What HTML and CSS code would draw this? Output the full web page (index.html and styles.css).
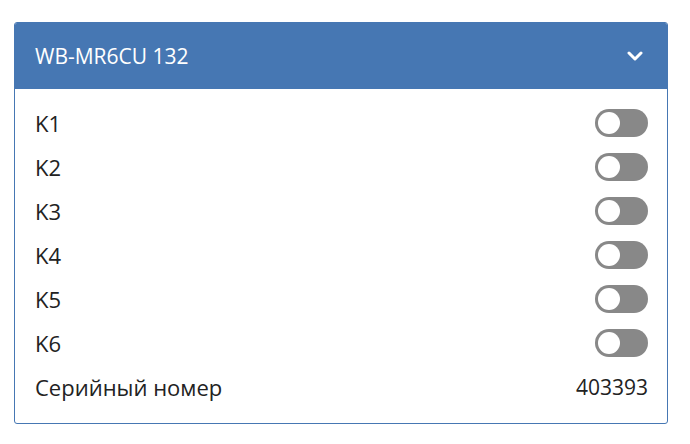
FILE: index.html
```html
<!DOCTYPE html>
<html>
<head>
<meta charset="utf-8">
<link rel="stylesheet" href="styles.css">
</head>
<body>
<div class="card">
  <div class="card-header">
    <span class="title">WB-MR6CU 132</span>
    <svg class="chevron" width="16" height="10" viewBox="0 0 16 10"><path d="M2 2 L8 8 L14 2" fill="none" stroke="#fff" stroke-width="3" stroke-linecap="round" stroke-linejoin="round"/></svg>
  </div>
  <div class="card-body">
    <div class="row"><span>K1</span><span class="toggle"><span class="knob"></span></span></div>
    <div class="row"><span>K2</span><span class="toggle"><span class="knob"></span></span></div>
    <div class="row"><span>K3</span><span class="toggle"><span class="knob"></span></span></div>
    <div class="row"><span>K4</span><span class="toggle"><span class="knob"></span></span></div>
    <div class="row"><span>K5</span><span class="toggle"><span class="knob"></span></span></div>
    <div class="row"><span>K6</span><span class="toggle"><span class="knob"></span></span></div>
    <div class="row"><span>Серийный номер</span><span class="value">403393</span></div>
  </div>
</div>
</body>
</html>
```
FILE: styles.css
```css
html, body {
  margin: 0;
  padding: 0;
  background: #fff;
}
body {
  padding: 22px 22px 0 14px;
  font-family: "Open Sans", "Noto Sans", sans-serif;
  color: #222;
}
.card {
  width: 654px;
  box-sizing: border-box;
  border: 1px solid #4677b3;
  border-radius: 3px;
  overflow: hidden;
}
.card-header {
  background: #4677b3;
  color: #fff;
  height: 66px;
  display: flex;
  align-items: center;
  justify-content: space-between;
  padding: 0 24px 0 20px;
  font-size: 21px;
}
.chevron {
  display: block;
}
.card-body {
  padding: 12px 19px 14px 20px;
}
.row {
  height: 44px;
  display: flex;
  align-items: center;
  justify-content: space-between;
  font-size: 22px;
}
.toggle {
  width: 53px;
  height: 28px;
  border-radius: 14px;
  background: #888;
  box-sizing: border-box;
  padding: 3px;
  display: flex;
  align-items: center;
}
.knob {
  width: 22px;
  height: 22px;
  border-radius: 50%;
  background: #fff;
}
.value {
  font-size: 21px;
}
```
